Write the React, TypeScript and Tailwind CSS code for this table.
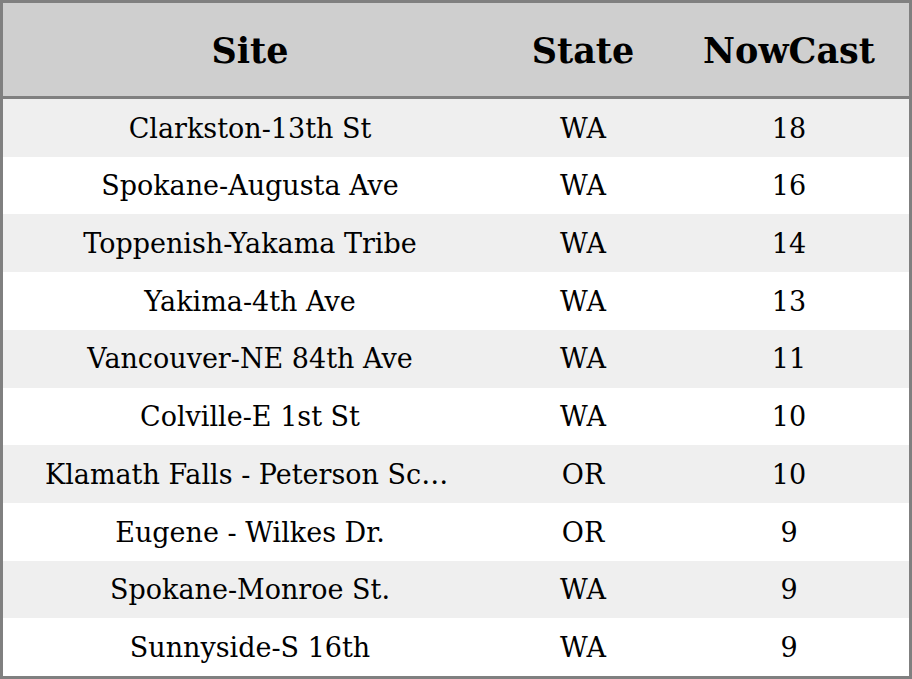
import React from 'react';

const rows: [string, string, number][] = [
  ['Clarkston-13th St', 'WA', 18],
  ['Spokane-Augusta Ave', 'WA', 16],
  ['Toppenish-Yakama Tribe', 'WA', 14],
  ['Yakima-4th Ave', 'WA', 13],
  ['Vancouver-NE 84th Ave', 'WA', 11],
  ['Colville-E 1st St', 'WA', 10],
  ['Klamath Falls - Peterson School', 'OR', 10],
  ['Eugene - Wilkes Dr.', 'OR', 9],
  ['Spokane-Monroe St.', 'WA', 9],
  ['Sunnyside-S 16th', 'WA', 9],
];

const App: React.FC = () => {
  return (
    <div
      className="w-[912px] h-[679px] flex flex-col border-[3px] border-[#808080] bg-white text-black"
      style={{ fontFamily: '"DejaVu Serif", serif' }}
    >
      <div className="h-[96px] shrink-0 grid grid-cols-[494px_172px_1fr] items-center pt-[4px] bg-[#cfcfcf] border-b-[3px] border-[#808080] text-[35px] font-bold">
        <div className="text-center">Site</div>
        <div className="text-center">State</div>
        <div className="text-center">NowCast</div>
      </div>
      {rows.map(([site, state, val], i) => (
        <div
          key={i}
          className={`flex-1 grid grid-cols-[494px_172px_1fr] items-center pt-[2px] text-[27px] ${i % 2 === 0 ? 'bg-[#efefef]' : 'bg-white'}`}
        >
          <div className="text-center truncate px-[42px]">{site}</div>
          <div className="text-center">{state}</div>
          <div className="text-center">{val}</div>
        </div>
      ))}
    </div>
  );
};

export default App;
